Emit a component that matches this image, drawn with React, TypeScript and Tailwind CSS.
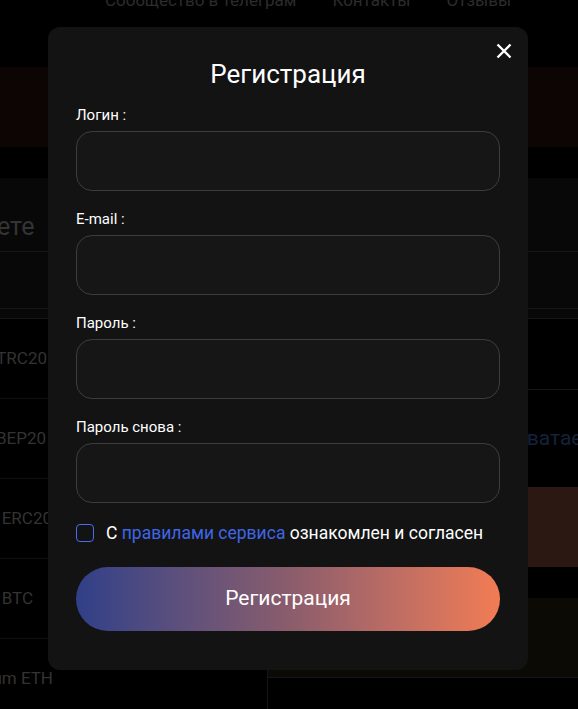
import { useState } from "react";

const rows = [
  { label: "USDT TRC20", box: "w-[47px]" },
  { label: "USDT BEP20", box: "w-[46px]" },
  { label: "USDT ERC20", box: "w-[52px]" },
  { label: "Bitcoin BTC", box: "w-[33px]" },
  { label: "Ethereum ETH", box: "w-[53px]" },
];

function Field({ label }: { label: string }) {
  return (
    <div className="flex flex-col gap-[8px]">
      <label className="text-[15px] leading-[16px] text-white">{label}</label>
      <input
        type="text"
        className="h-[60px] w-full rounded-[16px] border border-[#3d3d3d] bg-[#161616] px-[18px] text-[16px] text-white outline-none"
      />
    </div>
  );
}

export default function App() {
  const [agree, setAgree] = useState(false);

  return (
    <div className="relative h-[709px] w-full overflow-hidden bg-black font-['Roboto',sans-serif]">
      {/* page behind the dialog */}
      <div className="h-[67px] overflow-hidden">
        <div className="-mt-[10px] flex gap-[36px] pl-[105px] text-[17px] leading-[20px] text-[#2c2c2c]">
          <span>Сообщество в телеграм</span>
          <span>Контакты</span>
          <span>Отзывы</span>
        </div>
      </div>
      <div className="h-[80px] bg-[#0d0504]" />
      <div className="h-[31px]" />
      <div className="bg-[#080808]">
        <div className="flex h-[74px] items-center border-b border-[#161616] pt-[24px]">
          <h2 className="-ml-[3px] text-[25px] text-[#343434]">ете</h2>
        </div>
        <div className="h-[57px] border-b border-[#161616]" />
        <div className="h-[10px] border-b border-[#161616]" />
      </div>
      <div className="flex">
        <div className="w-[268px] shrink-0 border-r border-[#161616]">
          {rows.map((r) => (
            <div key={r.label} className="flex h-[80px] items-center border-b border-[#101010]">
              <div className={`flex justify-end whitespace-nowrap text-[17px] text-[#333] ${r.box}`}>
                {r.label}
              </div>
            </div>
          ))}
        </div>
        <div className="min-w-0 flex-1 overflow-hidden">
          <div className="h-[71px] border-b border-[#161616]" />
          <div className="flex h-[97px] items-center whitespace-nowrap pl-[217px] text-[21px] text-[#14233a]">
            Не хватает нужной сети?
          </div>
          <div className="h-[80px] bg-[#2b1812]" />
          <div className="h-[31px]" />
          <div className="h-[80px] border-b border-[#161616] bg-[#0b0a05]" />
        </div>
      </div>

      {/* dialog */}
      <div className="absolute left-[48px] top-[27px] w-[480px] rounded-[12px] bg-[#131313] px-[28px] pb-[39px] pt-[32px]">
        <button className="absolute right-[9px] top-[9px] flex h-[30px] w-[30px] items-center justify-center text-white">
          <svg width="16" height="16" viewBox="0 0 16 16" fill="none" stroke="currentColor" strokeWidth="2.3">
            <path d="M1.5 1.5 14.5 14.5M14.5 1.5 1.5 14.5" />
          </svg>
        </button>
        <h1 className="text-center text-[26px] leading-[30px] text-white">Регистрация</h1>
        <form className="mt-[18px] flex flex-col gap-[20px]" onSubmit={(e) => e.preventDefault()}>
          <Field label="Логин :" />
          <Field label="E-mail :" />
          <Field label="Пароль :" />
          <Field label="Пароль снова :" />
          <label className="flex h-[20px] items-center gap-[12px] text-[17.5px] text-white">
            <span
              onClick={() => setAgree(!agree)}
              className={`h-[18px] w-[18px] shrink-0 rounded-[4px] border-[1.5px] border-[#4a6cf0] ${agree ? "bg-[#4a6cf0]" : ""}`}
            />
            <span className="whitespace-nowrap">
              С <span className="text-[#3f66e8]">правилами сервиса</span> ознакомлен и согласен
            </span>
          </label>
          <button
            type="submit"
            className="mt-[4px] h-[64px] w-full rounded-full bg-linear-to-r from-[#303f88] via-[#8a5c6c] to-[#f27c53] text-[21px] text-white"
          >
            Регистрация
          </button>
        </form>
      </div>
    </div>
  );
}
